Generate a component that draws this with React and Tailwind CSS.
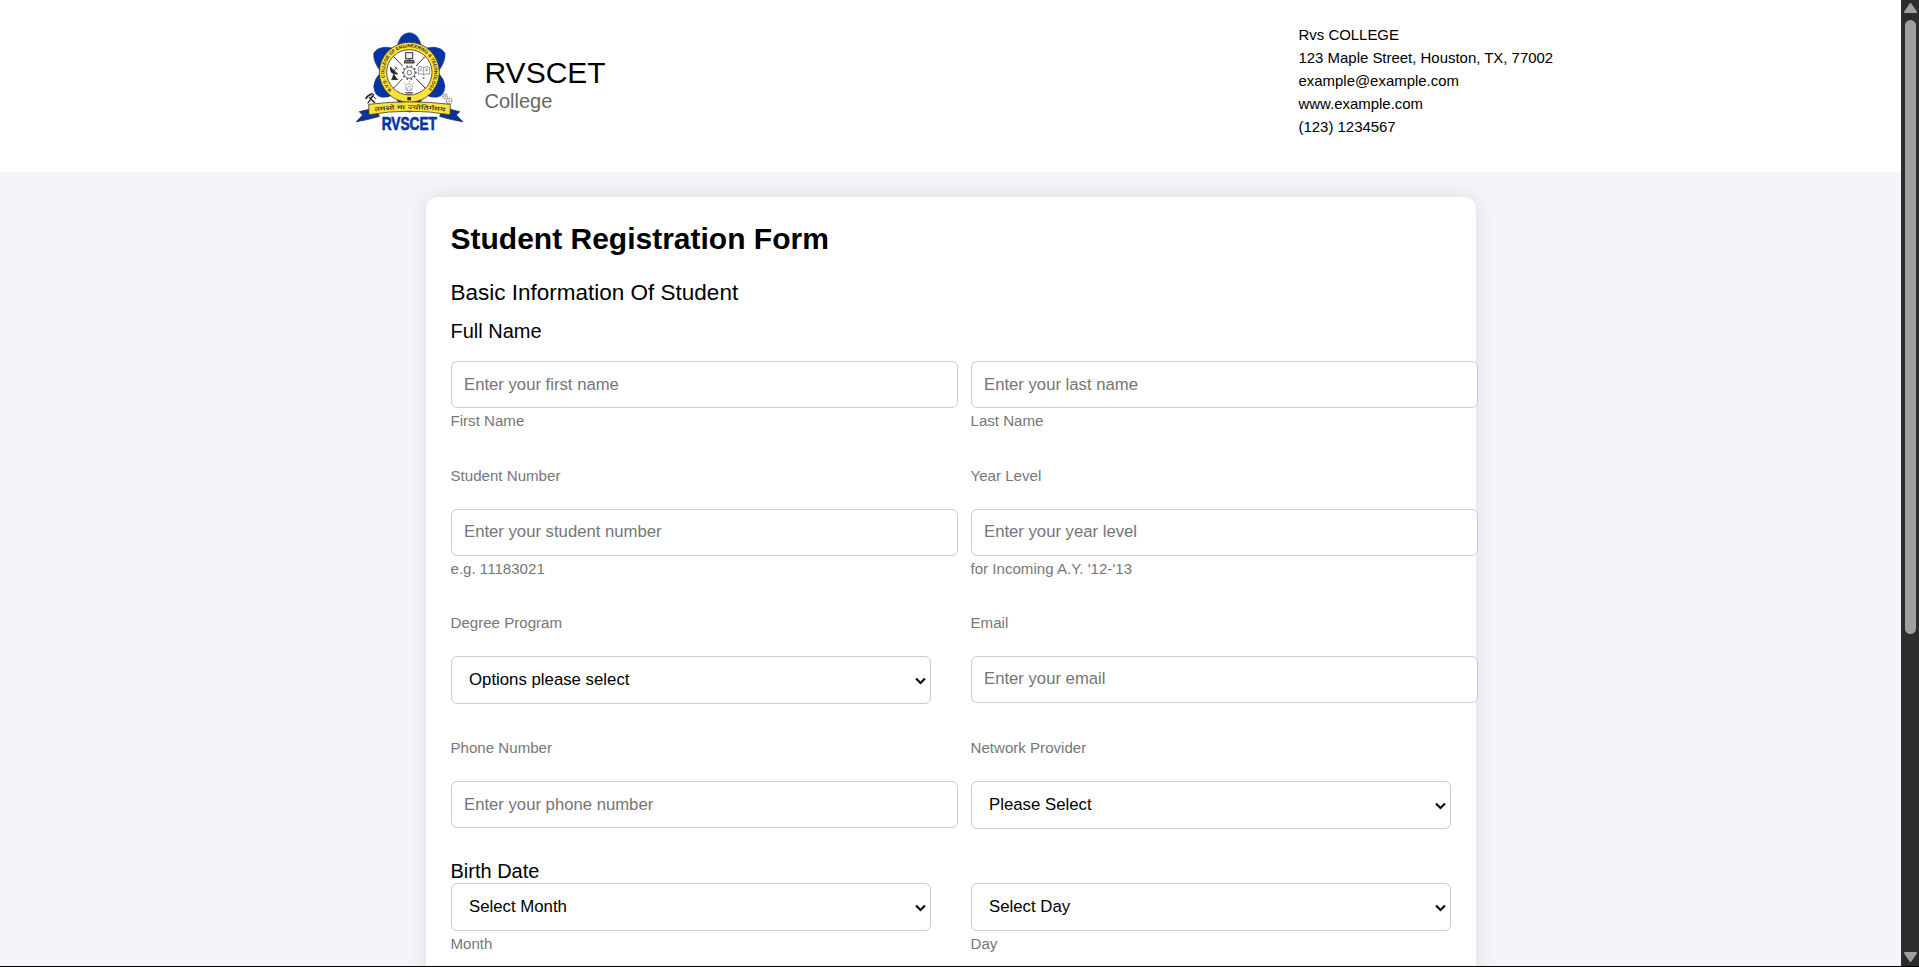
const CENTER_X = 208;
const CENTER_Y = 157;

function Gear({ cx, cy, r, teeth, width }) {
  const marks = Array.from({ length: teeth }, (_, i) => (i * 2 * Math.PI) / teeth);
  return (
    <g fill="none" stroke="#555" strokeWidth={width}>
      <circle cx={cx} cy={cy} r={r} fill="#fff" />
      <circle cx={cx} cy={cy} r={r * 0.4} />
      {marks.map((a) => (
        <line
          key={a}
          x1={cx + r * Math.cos(a)}
          y1={cy + r * Math.sin(a)}
          x2={cx + r * 1.3 * Math.cos(a)}
          y2={cy + r * 1.3 * Math.sin(a)}
          strokeWidth={width * 2}
        />
      ))}
    </g>
  );
}

function Logo() {
  return (
    <svg viewBox="0 0 420 360" className="h-[120px] w-[140px] shrink-0" role="img" aria-label="RVSCET">
      <defs>
        <path id="ring" d="M 155 210 A 75 75 0 1 1 261 210" />
        <path id="motto" d="M 92 276 Q 208 260 324 276" />
      </defs>
      <rect x="22" y="9" width="371" height="349" fill="#fefefe" />
      <path
        d="M165 87 Q173 78 177 62 Q186 39 208 38 Q230 39 239 62 Q243 78 251 87
           Q266 80 284 82 Q306 84 315 100 Q318 124 293 157
           Q313 176 315 199 Q312 230 290 232 Q270 233 251 222 L236 262 Q208 290 180 262
           L165 222 Q146 233 126 232 Q104 230 101 199 Q103 176 123 157
           Q98 124 101 100 Q110 84 132 82 Q150 80 165 87 Z"
        fill="#0634a4"
        stroke="#0a2a78"
        strokeWidth="1.5"
      />
      <circle cx={CENTER_X} cy={CENTER_Y} r="90" fill="#ffe13c" stroke="#3d3a20" strokeWidth="2.5" />
      <circle cx={CENTER_X} cy={CENTER_Y} r="68" fill="#fff" stroke="#3d3a20" strokeWidth="2.5" />
      <g stroke="#333" strokeWidth="3">
        <path d="M160 109 L188 138 M256 109 L228 138 M160 205 L188 176 M256 205 L228 176" />
      </g>
      <text fontFamily="Liberation Sans, sans-serif" fontSize="14" fontWeight="700" fill="#2b2a14">
        <textPath href="#ring" textLength="350" lengthAdjust="spacingAndGlyphs">
          R.V.S. COLLEGE OF ENGINEERING &amp; TECHNOLOGY
        </textPath>
      </text>
      <rect x="202" y="231" width="11" height="10" rx="2" fill="#222" />

      <Gear cx={208} cy={158} r={17} teeth={10} width={2.5} />

      <g fill="none" stroke="#333" strokeWidth="3">
        <rect x="197" y="98" width="21" height="18" fill="#eee" />
        <path d="M195 121 h26 l2 8 h-30 z" fill="#777" />
        <path d="M208 116 v5" />
      </g>

      <g fill="#222" stroke="#222" strokeWidth="2.5" strokeLinecap="round">
        <path d="M151 142 Q149 165 172 162 Z" />
        <path d="M161 153 L170 143 M172 148 L165 141" fill="none" />
        <path d="M157 177 L161 163 L170 177 Z" />
        <path d="M154 178 h20" />
      </g>

      <g fill="#fff" stroke="#666" strokeWidth="2">
        <path d="M251 143 Q243 136 235 142 V163 Q243 158 251 165 Q260 158 269 163 V142 Q260 136 251 143 Z" />
        <path d="M251 143 V165 M239 147 h7 M239 152 h7 M256 147 h8 M256 152 h8" fill="none" />
      </g>
      <circle cx="251" cy="174" r="2.5" fill="#333" />

      <g fill="none" stroke="#888" strokeWidth="2">
        <circle cx="207" cy="202" r="11" />
        <path d="M207 187 v-5 M195 191 l-3 -4 M219 191 l3 -4 M203 212 v-10 l4 -4 l4 4 v10" />
        <path d="M195 218 h24 M198 222 h18" stroke="#555" strokeWidth="3" />
      </g>

      <g fill="none" stroke="#222" strokeLinecap="round">
        <path d="M84 249 L101 224" strokeWidth="4" />
        <path d="M88 232 L104 248" strokeWidth="4" />
        <path d="M78 235 Q82 226 96 221" strokeWidth="5" />
        <path d="M93 228 Q103 228 107 236" strokeWidth="3" />
      </g>
      <Gear cx={315} cy={229} r={6.5} teeth={8} width={1.2} />
      <Gear cx={327} cy={243} r={8} teeth={9} width={1.2} />

      <g fill="#0634a4" stroke="#1a2340" strokeWidth="2.5" strokeLinejoin="round">
        <path d="M88 268 L58 275 L68 285 L49 305 Q82 300 118 289 L114 281 L88 283 Z" />
        <path d="M330 268 L359 275 L349 285 L368 305 Q335 300 299 289 L303 281 L330 283 Z" />
      </g>
      <path
        d="M86 253 Q208 238 331 253 L330 284 Q208 263 87 284 Z"
        fill="#ffe13c"
        stroke="#4a4620"
        strokeWidth="2.5"
        strokeLinejoin="round"
      />
      <text fontFamily="Noto Sans, Noto Sans Devanagari, sans-serif" fontSize="18" fontWeight="500" fontStyle="italic" fill="#2b2a14">
        <textPath href="#motto" startOffset="12" textLength="212" lengthAdjust="spacingAndGlyphs">
          तमसो मा ज्योतिर्गमय
        </textPath>
      </text>
      <text
        x="125"
        y="329"
        textLength="166"
        lengthAdjust="spacingAndGlyphs"
        fontFamily="Liberation Sans Narrow, Liberation Sans, sans-serif"
        fontSize="54"
        fontWeight="700"
        fill="#0634a4"
        stroke="#0634a4"
        strokeWidth="2"
      >
        RVSCET
      </text>
    </svg>
  );
}

function Caption({ children }) {
  return <p className="text-[15.1px] leading-[18px] text-[#777]">{children}</p>;
}

function Input({ placeholder, low }) {
  const shift = low ? "pt-px pb-0" : "pt-0 pb-px";
  return (
    <input
      className={`block h-[47px] w-[507px] shrink-0 rounded-[6px] border border-[#ccc] bg-white px-[12.5px] text-[16.7px] text-black placeholder:text-[#757575] ${shift}`}
      placeholder={placeholder}
    />
  );
}

function Select({ label }) {
  return (
    <div className="relative">
      <select className="block h-12 w-[480px] appearance-none rounded-[6px] border border-[#ccc] bg-white pr-8 pl-[17.5px] text-[16.8px] text-black">
        <option>{label}</option>
      </select>
      <svg viewBox="0 0 11 8" className="pointer-events-none absolute top-[21px] right-[5px] h-2 w-[11px]">
        <path d="M1 1.5 L5.5 6 L10 1.5" fill="none" stroke="#111" strokeWidth="2.2" />
      </svg>
    </div>
  );
}

function Column({ children }) {
  return <div className="flex w-[480px] flex-col">{children}</div>;
}

function Field({ title, hint, children }) {
  return (
    <Column>
      {title && (
        <div className="mb-6">
          <Caption>{title}</Caption>
        </div>
      )}
      {children}
      {hint && (
        <div className="mt-1">
          <Caption>{hint}</Caption>
        </div>
      )}
    </Column>
  );
}

function Scrollbar() {
  return (
    <aside className="flex h-[966px] w-[18px] shrink-0 flex-col items-center bg-[#2c2c2c] pt-[3px] pb-1">
      <svg viewBox="0 0 13 10" className="ml-px h-2.5 w-[13px] shrink-0">
        <path d="M6.5 1 L12 9 H1 Z" fill="#9f9f9f" stroke="#9f9f9f" strokeWidth="2" strokeLinejoin="round" />
      </svg>
      <div className="mt-[7px] ml-[1px] h-[614px] w-[11px] shrink-0 rounded-full bg-[#9f9f9f]" />
      <svg viewBox="0 0 13 10" className="mt-auto ml-px h-2.5 w-[13px] shrink-0">
        <path d="M6.5 9 L12 1 H1 Z" fill="#9f9f9f" stroke="#9f9f9f" strokeWidth="2" strokeLinejoin="round" />
      </svg>
    </aside>
  );
}

export default function App() {
  return (
    <div className="h-[967px] overflow-hidden bg-black font-['Liberation_Sans',Arial,sans-serif] text-black">
      <div className="flex h-[966px] overflow-hidden">
        <main className="h-[966px] flex-1 overflow-hidden bg-[#f4f4f9]">
          <header className="flex h-[172px] justify-between bg-white pr-[346px] pl-[340px]">
            <div className="flex gap-[4.5px] pt-5">
              <Logo />
              <div className="pt-9">
                <h1 className="text-[30px] leading-[34px]">RVSCET</h1>
                <p className="text-[20px] leading-[23px] text-[#666]">College</p>
              </div>
            </div>
            <address className="w-[256.5px] pt-[23px] text-[14.95px] leading-[23px] whitespace-nowrap not-italic">
              <p>Rvs COLLEGE</p>
              <p>123 Maple Street, Houston, TX, 77002</p>
              <p>example@example.com</p>
              <p>www.example.com</p>
              <p>(123) 1234567</p>
            </address>
          </header>

          <form className="mx-auto mt-[25px] h-[1400px] w-[1050px] rounded-[12px] bg-white p-[25px] shadow-[0_0_20px_rgba(0,0,0,0.1)]">
            <h2 className="text-[30px] leading-[34px] font-bold">Student Registration Form</h2>
            <h3 className="mt-6 mb-[15px] text-[22.5px] leading-[25px]">Basic Information Of Student</h3>
            <h4 className="text-[20px] leading-[23px]">Full Name</h4>

            <div className="mt-[18px] flex gap-10">
              <Field hint="First Name">
                <Input placeholder="Enter your first name" low />
              </Field>
              <Field hint="Last Name">
                <Input placeholder="Enter your last name" low />
              </Field>
            </div>
            <div className="mt-[37px] flex gap-10">
              <Field title="Student Number" hint="e.g. 11183021">
                <Input placeholder="Enter your student number" />
              </Field>
              <Field title="Year Level" hint="for Incoming A.Y. '12-'13">
                <Input placeholder="Enter your year level" />
              </Field>
            </div>
            <div className="mt-[36px] flex gap-10">
              <Field title="Degree Program">
                <Select label="Options please select" />
              </Field>
              <Field title="Email">
                <Input placeholder="Enter your email" />
              </Field>
            </div>
            <div className="mt-[35px] flex gap-10">
              <Field title="Phone Number">
                <Input placeholder="Enter your phone number" low />
              </Field>
              <Field title="Network Provider">
                <Select label="Please Select" />
              </Field>
            </div>

            <h4 className="mt-[31px] text-[20px] leading-[23px]">Birth Date</h4>
            <div className="flex gap-10">
              <Field hint="Month">
                <Select label="Select Month" />
              </Field>
              <Field hint="Day">
                <Select label="Select Day" />
              </Field>
            </div>
          </form>
        </main>
        <Scrollbar />
      </div>
    </div>
  );
}
